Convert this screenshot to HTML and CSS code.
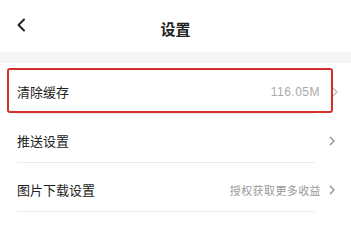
FILE: index.html
```html
<!DOCTYPE html>
<html lang="zh-CN">
<head>
<meta charset="utf-8">
<title>设置</title>
<link rel="stylesheet" href="styles.css">
</head>
<body>
<div class="page">
  <header class="header">
    <span class="back">
      <svg width="10" height="14" viewBox="0 0 10 14"><path d="M8 1.5L2.5 7 8 12.5" fill="none" stroke="#222" stroke-width="2" stroke-linecap="round" stroke-linejoin="round"/></svg>
    </span>
    <h1 class="title">设置</h1>
  </header>
  <div class="band"></div>
  <ul class="list">
    <li class="row row-highlight">
      <span class="label">清除缓存</span>
      <span class="value value-light">116.05M</span>
      <svg class="chev chev-light" width="6" height="10" viewBox="0 0 6 10"><path d="M1 1l4 4-4 4" fill="none" stroke="#bbb" stroke-width="1.2"/></svg>
      <span class="highlight"></span>
    </li>
    <li class="row">
      <span class="label">推送设置</span>
      <span class="value"></span>
      <svg class="chev" width="6" height="10" viewBox="0 0 6 10"><path d="M1 1l4 4-4 4" fill="none" stroke="#888" stroke-width="1.2"/></svg>
    </li>
    <li class="row">
      <span class="label">图片下载设置</span>
      <span class="value">授权获取更多收益</span>
      <svg class="chev" width="6" height="10" viewBox="0 0 6 10"><path d="M1 1l4 4-4 4" fill="none" stroke="#888" stroke-width="1.2"/></svg>
    </li>
  </ul>
</div>
</body>
</html>
```

FILE: styles.css
```css
* { box-sizing: border-box; }
html, body {
  margin: 0;
  padding: 0;
  background: #fff;
  font-family: "Noto Sans CJK SC", "Noto Sans", "Liberation Sans", sans-serif;
  color: #222;
}
.page { width: 351px; overflow: hidden; }
.header {
  height: 52px;
  padding-top: 6px;
  display: flex;
  align-items: center;
  justify-content: center;
  position: relative;
}
.back {
  position: absolute;
  left: 16px;
  top: 18px;
  display: flex;
}
.title {
  margin: 0;
  font-size: 15px;
  font-weight: 700;
  line-height: 20px;
  color: #222;
}
.band {
  height: 11px;
  background: #f4f4f4;
}
.list {
  list-style: none;
  margin: 0;
  padding: 2px 0 0;
}
.row {
  position: relative;
  height: 49px;
  padding: 4px 16px 0 17px;
  display: flex;
  align-items: center;
  background: linear-gradient(#ebebeb, #ebebeb) no-repeat left 17px bottom / 298px 1px;
}
.label {
  font-size: 13px;
  color: #222;
  flex: 1;
  line-height: 18px;
}
.value {
  font-size: 11px;
  color: #999;
  letter-spacing: 0.4px;
  margin-right: 8px;
  line-height: 16px;
}
.value-light {
  font-family: "Liberation Sans", sans-serif;
  font-size: 12px;
  letter-spacing: 0.5px;
  color: #aaa;
  margin-right: 12px;
}
.chev { display: block; }
.chev-light { margin-right: -3px; }
.highlight {
  position: absolute;
  left: 7px;
  top: 3px;
  width: 326px;
  height: 45px;
  border: 2px solid #d3302b;
  border-radius: 3px;
  pointer-events: none;
}
```
